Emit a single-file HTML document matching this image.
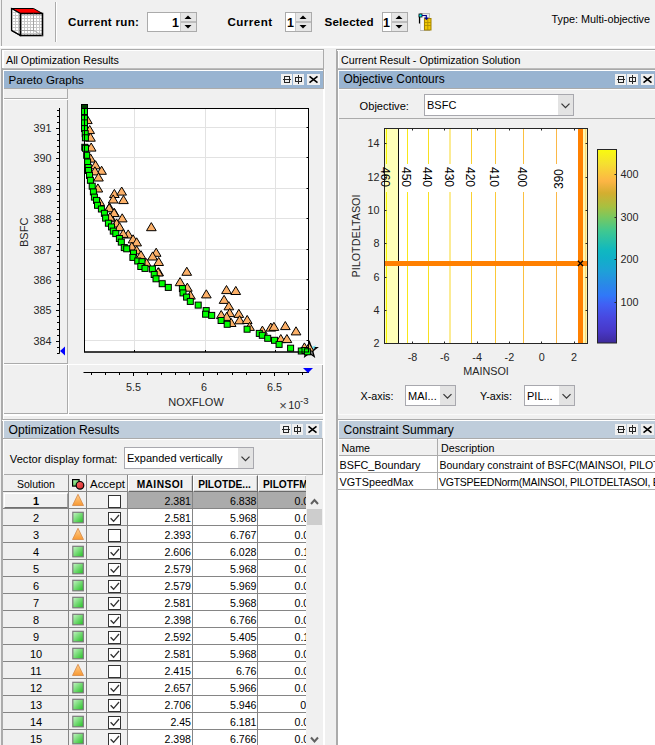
<!DOCTYPE html><html><head><meta charset="utf-8"><style>
html,body{margin:0;padding:0;width:655px;height:745px;overflow:hidden;background:#f0f0f0;font-family:"Liberation Sans",sans-serif;color:#000;position:relative}
div{box-sizing:border-box}
svg{position:absolute;overflow:visible}
</style></head><body>
<div style="position:absolute;left:1px;top:0px;width:1px;height:47px;background:#ababab"></div>
<div style="position:absolute;left:0px;top:46px;width:655px;height:2px;background:#fff"></div>
<svg style="left:0;top:0" width="60" height="46">
<defs><pattern id="gp" width="3" height="3" patternUnits="userSpaceOnUse"><rect width="3" height="3" fill="#fff"/><path d="M0 0.5H3M0.5 0V3" stroke="#c8c8c8" stroke-width="1"/></pattern></defs>
<polygon points="11.5,8.5 33.5,8.5 42.5,13.5 20.5,13.5" fill="#f00" stroke="#000" stroke-width="1"/>
<polygon points="11.5,8.5 20.5,13.5 20.5,35.5 11.5,30.5" fill="url(#gp)" stroke="#000" stroke-width="1.2"/>
<rect x="20.5" y="13.5" width="22" height="22" fill="url(#gp)" stroke="#000" stroke-width="1.6"/>
<path d="M11.5 30.5L20.5 35.5" stroke="#000" stroke-width="1.4"/>
<path d="M33.5 13.5V30.5H20.5M33.5 30.5L42.5 35.5" stroke="#888" stroke-width="0.6" fill="none"/>
</svg>
<div style="position:absolute;left:55px;top:2px;width:1px;height:40px;background:#ababab"></div>
<div style="position:absolute;left:56px;top:2px;width:1px;height:40px;background:#fff"></div>
<div style="position:absolute;left:68px;top:16px;font-size:11.6px;font-weight:700;line-height:1;white-space:nowrap;letter-spacing:0.3px">Current run:</div>
<div style="position:absolute;left:147px;top:12px;width:50px;height:20px;border:1px solid #ababab;background:#fff"></div>
<div style="position:absolute;left:180px;top:13px;width:16px;height:18px;background:#e6e6e6"></div>
<div style="position:absolute;left:180px;top:21px;width:16px;height:2px;background:#bdbdbd"></div>
<div style="position:absolute;left:180px;top:13px;width:1px;height:18px;background:#c8c8c8"></div>
<svg style="left:0;top:0" width="655" height="48"><polygon points="184.5,19 191.5,19 188.0,15.5" fill="#000"/><polygon points="184.5,25 191.5,25 188.0,28.5" fill="#000"/></svg>
<div style="position:absolute;right:476px;top:17px;font-size:12.5px;font-weight:700;line-height:1;white-space:nowrap;text-align:right;">1</div>
<div style="position:absolute;left:227.5px;top:16px;font-size:11.6px;font-weight:700;line-height:1;white-space:nowrap;letter-spacing:0.45px">Current</div>
<div style="position:absolute;left:285px;top:12px;width:27px;height:20px;border:1px solid #ababab;background:#fff"></div>
<div style="position:absolute;left:295px;top:13px;width:16px;height:18px;background:#e6e6e6"></div>
<div style="position:absolute;left:295px;top:21px;width:16px;height:2px;background:#bdbdbd"></div>
<div style="position:absolute;left:295px;top:13px;width:1px;height:18px;background:#c8c8c8"></div>
<svg style="left:0;top:0" width="655" height="48"><polygon points="299.5,19 306.5,19 303.0,15.5" fill="#000"/><polygon points="299.5,25 306.5,25 303.0,28.5" fill="#000"/></svg>
<div style="position:absolute;right:361px;top:17px;font-size:12.5px;font-weight:700;line-height:1;white-space:nowrap;text-align:right;">1</div>
<div style="position:absolute;left:324.5px;top:16px;font-size:11.6px;font-weight:700;line-height:1;white-space:nowrap;letter-spacing:0.2px">Selected</div>
<div style="position:absolute;left:382px;top:12px;width:26px;height:20px;border:1px solid #ababab;background:#fff"></div>
<div style="position:absolute;left:391px;top:13px;width:16px;height:18px;background:#e6e6e6"></div>
<div style="position:absolute;left:391px;top:21px;width:16px;height:2px;background:#bdbdbd"></div>
<div style="position:absolute;left:391px;top:13px;width:1px;height:18px;background:#c8c8c8"></div>
<svg style="left:0;top:0" width="655" height="48"><polygon points="395.5,19 402.5,19 399.0,15.5" fill="#000"/><polygon points="395.5,25 402.5,25 399.0,28.5" fill="#000"/></svg>
<div style="position:absolute;right:265px;top:17px;font-size:12.5px;font-weight:700;line-height:1;white-space:nowrap;text-align:right;">1</div>
<svg style="left:412px;top:8px" width="28" height="28">
<rect x="8.5" y="5.5" width="9" height="17" fill="#e8e8e8" stroke="#b8b8b8" stroke-width="1"/>
<rect x="8.5" y="9" width="3" height="13" fill="#f8f8f8"/>
<rect x="12.5" y="10.5" width="6.5" height="11.5" fill="#f0c800" stroke="#a08000" stroke-width="1"/>
<path d="M13 14.5H19M13 17.5H19M15.8 11V22" stroke="#b09000" stroke-width="0.9"/>
<path d="M7.5 7V15.5" stroke="#000" stroke-width="1.2"/>
<rect x="7" y="6" width="3" height="3" fill="#00ffff" stroke="#000" stroke-width="0.8"/>
<path d="M10 7.5H14.3V10" stroke="#000090" stroke-width="1.2" fill="none"/>
<polygon points="12,9.5 16.8,9.5 14.4,12.3" fill="#000090"/>
</svg>
<div style="position:absolute;left:551.6px;top:14.2px;font-size:10.8px;font-weight:400;line-height:1;white-space:nowrap;">Type: Multi-objective</div>
<div style="position:absolute;left:1px;top:49px;width:323px;height:1px;background:#ababab"></div>
<div style="position:absolute;left:1px;top:49px;width:2px;height:696px;background:#ababab"></div>
<div style="position:absolute;left:3px;top:50px;width:1px;height:695px;background:#fff"></div>
<div style="position:absolute;left:2px;top:50px;width:1px;height:18px;background:#fff"></div>
<div style="position:absolute;left:2px;top:50px;width:321px;height:1px;background:#fff"></div>
<div style="position:absolute;left:323px;top:49px;width:1px;height:20px;background:#ababab"></div>
<div style="position:absolute;left:3px;top:68px;width:321px;height:1px;background:#bcbcbc"></div>
<div style="position:absolute;left:3px;top:69px;width:321px;height:1px;background:#a9a9a9"></div>
<div style="position:absolute;left:3px;top:70px;width:320px;height:1px;background:#fff"></div>
<div style="position:absolute;left:6px;top:55px;font-size:10.7px;font-weight:400;line-height:1;white-space:nowrap;">All Optimization Results</div>
<div style="position:absolute;left:4px;top:71px;width:319px;height:17px;background:#99b4d1"></div>
<div style="position:absolute;left:8.5px;top:74.3px;font-size:11.6px;font-weight:400;line-height:1;white-space:nowrap;">Pareto Graphs</div>
<svg style="left:281px;top:74px" width="42" height="12">
<rect x="0" y="0" width="11" height="11" fill="#f0f0f0"/>
<rect x="12" y="0" width="11" height="11" fill="#f0f0f0"/>
<rect x="26" y="0" width="13" height="11" fill="#f0f0f0"/>
<rect x="3.5" y="2.5" width="5" height="6" fill="none" stroke="#262626" stroke-width="1"/><path d="M2 5.5H10" stroke="#262626" stroke-width="1"/>
<rect x="14.5" y="3.5" width="6" height="4" fill="none" stroke="#262626" stroke-width="1"/><path d="M17.5 1V10" stroke="#262626" stroke-width="1"/>
<path d="M28.5 2.3L36.5 8.7M36.5 2.3L28.5 8.7" stroke="#000" stroke-width="1.6"/>
</svg>
<div style="position:absolute;left:323px;top:49px;width:1px;height:40px;background:#ababab"></div>
<div style="position:absolute;left:4px;top:88px;width:320px;height:1px;background:#ababab"></div>
<div style="position:absolute;left:324px;top:69px;width:1px;height:676px;background:#fff"></div>
<div style="position:absolute;left:323px;top:89px;width:1px;height:656px;background:#fff"></div>
<div style="position:absolute;left:3px;top:89px;width:320px;height:325px;background:#fff"></div>
<div style="position:absolute;left:4px;top:89px;width:64px;height:10px;border-right:1px solid #ababab;border-bottom:1px solid #ababab;background:#f0f0f0"></div>
<div style="position:absolute;left:4px;top:100px;width:64px;height:264px;border-right:1px solid #ababab;border-bottom:1px solid #ababab;background:#f0f0f0"></div>
<div style="position:absolute;left:68px;top:89px;width:255px;height:275px;background:#f0f0f0"></div>
<div style="position:absolute;left:4px;top:365px;width:64px;height:49px;border-right:1px solid #ababab;border-bottom:1px solid #ababab;background:#f0f0f0"></div>
<div style="position:absolute;left:69px;top:365px;width:254px;height:49px;border-right:1px solid #ababab;border-bottom:1px solid #ababab;background:#f0f0f0"></div>
<svg style="left:0;top:0" width="655" height="745"><rect x="84.5" y="108.5" width="224.0" height="243.5" fill="#fff"/><path d="M134.5 108.5V352" stroke="#e2e2e2" stroke-width="1"/><path d="M205.5 108.5V352" stroke="#e2e2e2" stroke-width="1"/><path d="M275.5 108.5V352" stroke="#e2e2e2" stroke-width="1"/><path d="M84.5 127.5H308.5" stroke="#e2e2e2" stroke-width="1"/><path d="M84.5 157.5H308.5" stroke="#e2e2e2" stroke-width="1"/><path d="M84.5 188.5H308.5" stroke="#e2e2e2" stroke-width="1"/><path d="M84.5 218.5H308.5" stroke="#e2e2e2" stroke-width="1"/><path d="M84.5 249.5H308.5" stroke="#e2e2e2" stroke-width="1"/><path d="M84.5 279.5H308.5" stroke="#e2e2e2" stroke-width="1"/><path d="M84.5 309.5H308.5" stroke="#e2e2e2" stroke-width="1"/><path d="M84.5 340.5H308.5" stroke="#e2e2e2" stroke-width="1"/><rect x="84.5" y="108.5" width="224.0" height="243.5" fill="none" stroke="#000" stroke-width="1"/><path d="M306.5 127.5H308.5" stroke="#000" stroke-width="1"/><path d="M306.5 157.5H308.5" stroke="#000" stroke-width="1"/><path d="M306.5 188.5H308.5" stroke="#000" stroke-width="1"/><path d="M306.5 218.5H308.5" stroke="#000" stroke-width="1"/><path d="M306.5 249.5H308.5" stroke="#000" stroke-width="1"/><path d="M306.5 279.5H308.5" stroke="#000" stroke-width="1"/><path d="M306.5 309.5H308.5" stroke="#000" stroke-width="1"/><path d="M306.5 340.5H308.5" stroke="#000" stroke-width="1"/><path d="M134.5 352V350" stroke="#000" stroke-width="1"/><path d="M205.5 352V350" stroke="#000" stroke-width="1"/><path d="M275.5 352V350" stroke="#000" stroke-width="1"/><polygon points="309.5,342.0 311.4,347.3 317.1,347.5 312.6,351.0 314.2,356.5 309.5,353.3 304.8,356.5 306.4,351.0 301.9,347.5 307.6,347.3" fill="#808080" stroke="#000" stroke-width="1.3"/><polygon points="311,347 316,345.5 313,350" fill="#70e0f0"/><polygon points="82.5,123.6 92.2,123.6 87.4,115.5" fill="#fcb068" stroke="#000" stroke-width="1" stroke-linejoin="miter"/><polygon points="84.8,133.6 94.5,133.6 89.7,125.5" fill="#fcb068" stroke="#000" stroke-width="1" stroke-linejoin="miter"/><polygon points="85.6,141.2 95.3,141.2 90.5,133.1" fill="#fcb068" stroke="#000" stroke-width="1" stroke-linejoin="miter"/><polygon points="86.3,151.1 96.0,151.1 91.2,143.0" fill="#fcb068" stroke="#000" stroke-width="1" stroke-linejoin="miter"/><polygon points="85.7,162.1 95.4,162.1 90.6,154.0" fill="#fcb068" stroke="#000" stroke-width="1" stroke-linejoin="miter"/><polygon points="90.6,168.8 100.3,168.8 95.5,160.7" fill="#fcb068" stroke="#000" stroke-width="1" stroke-linejoin="miter"/><polygon points="96.7,174.3 106.4,174.3 101.6,166.2" fill="#fcb068" stroke="#000" stroke-width="1" stroke-linejoin="miter"/><polygon points="90.0,174.9 99.7,174.9 94.9,166.8" fill="#fcb068" stroke="#000" stroke-width="1" stroke-linejoin="miter"/><polygon points="93.6,181.0 103.3,181.0 98.5,172.9" fill="#fcb068" stroke="#000" stroke-width="1" stroke-linejoin="miter"/><polygon points="93.0,192.0 102.7,192.0 97.9,183.9" fill="#fcb068" stroke="#000" stroke-width="1" stroke-linejoin="miter"/><polygon points="109.5,197.5 119.2,197.5 114.4,189.4" fill="#fcb068" stroke="#000" stroke-width="1" stroke-linejoin="miter"/><polygon points="116.8,195.1 126.5,195.1 121.7,187.0" fill="#fcb068" stroke="#000" stroke-width="1" stroke-linejoin="miter"/><polygon points="108.3,203.0 118.0,203.0 113.2,194.9" fill="#fcb068" stroke="#000" stroke-width="1" stroke-linejoin="miter"/><polygon points="118.6,203.6 128.3,203.6 123.5,195.5" fill="#fcb068" stroke="#000" stroke-width="1" stroke-linejoin="miter"/><polygon points="94.8,205.5 104.5,205.5 99.7,197.4" fill="#fcb068" stroke="#000" stroke-width="1" stroke-linejoin="miter"/><polygon points="104.6,211.0 114.3,211.0 109.5,202.9" fill="#fcb068" stroke="#000" stroke-width="1" stroke-linejoin="miter"/><polygon points="109.5,216.4 119.2,216.4 114.4,208.3" fill="#fcb068" stroke="#000" stroke-width="1" stroke-linejoin="miter"/><polygon points="117.4,221.9 127.1,221.9 122.2,213.8" fill="#fcb068" stroke="#000" stroke-width="1" stroke-linejoin="miter"/><polygon points="106.3,221.8 116.0,221.8 111.2,213.7" fill="#fcb068" stroke="#000" stroke-width="1" stroke-linejoin="miter"/><polygon points="104.3,211.8 114.0,211.8 109.2,203.7" fill="#fcb068" stroke="#000" stroke-width="1" stroke-linejoin="miter"/><polygon points="109.2,216.6 118.9,216.6 114.1,208.5" fill="#fcb068" stroke="#000" stroke-width="1" stroke-linejoin="miter"/><polygon points="105.0,220.9 114.7,220.9 109.9,212.8" fill="#fcb068" stroke="#000" stroke-width="1" stroke-linejoin="miter"/><polygon points="111.7,227.0 121.4,227.0 116.6,218.9" fill="#fcb068" stroke="#000" stroke-width="1" stroke-linejoin="miter"/><polygon points="114.7,230.7 124.4,230.7 119.6,222.6" fill="#fcb068" stroke="#000" stroke-width="1" stroke-linejoin="miter"/><polygon points="146.5,230.7 156.2,230.7 151.3,222.6" fill="#fcb068" stroke="#000" stroke-width="1" stroke-linejoin="miter"/><polygon points="123.3,238.0 133.0,238.0 128.2,229.9" fill="#fcb068" stroke="#000" stroke-width="1" stroke-linejoin="miter"/><polygon points="118.4,237.4 128.1,237.4 123.2,229.3" fill="#fcb068" stroke="#000" stroke-width="1" stroke-linejoin="miter"/><polygon points="128.2,242.9 137.9,242.9 133.1,234.8" fill="#fcb068" stroke="#000" stroke-width="1" stroke-linejoin="miter"/><polygon points="131.8,245.9 141.5,245.9 136.7,237.8" fill="#fcb068" stroke="#000" stroke-width="1" stroke-linejoin="miter"/><polygon points="126.9,250.2 136.6,250.2 131.8,242.1" fill="#fcb068" stroke="#000" stroke-width="1" stroke-linejoin="miter"/><polygon points="131.8,253.9 141.5,253.9 136.7,245.8" fill="#fcb068" stroke="#000" stroke-width="1" stroke-linejoin="miter"/><polygon points="136.1,258.8 145.8,258.8 141.0,250.7" fill="#fcb068" stroke="#000" stroke-width="1" stroke-linejoin="miter"/><polygon points="151.3,256.3 161.0,256.3 156.2,248.2" fill="#fcb068" stroke="#000" stroke-width="1" stroke-linejoin="miter"/><polygon points="147.7,260.0 157.4,260.0 152.6,251.9" fill="#fcb068" stroke="#000" stroke-width="1" stroke-linejoin="miter"/><polygon points="141.6,266.7 151.3,266.7 146.5,258.6" fill="#fcb068" stroke="#000" stroke-width="1" stroke-linejoin="miter"/><polygon points="153.8,265.5 163.5,265.5 158.7,257.4" fill="#fcb068" stroke="#000" stroke-width="1" stroke-linejoin="miter"/><polygon points="153.8,275.8 163.5,275.8 158.7,267.7" fill="#fcb068" stroke="#000" stroke-width="1" stroke-linejoin="miter"/><polygon points="153.2,275.9 162.9,275.9 158.1,267.8" fill="#fcb068" stroke="#000" stroke-width="1" stroke-linejoin="miter"/><polygon points="181.9,275.3 191.6,275.3 186.8,267.2" fill="#fcb068" stroke="#000" stroke-width="1" stroke-linejoin="miter"/><polygon points="175.2,285.7 184.9,285.7 180.1,277.6" fill="#fcb068" stroke="#000" stroke-width="1" stroke-linejoin="miter"/><polygon points="182.5,291.2 192.2,291.2 187.3,283.1" fill="#fcb068" stroke="#000" stroke-width="1" stroke-linejoin="miter"/><polygon points="185.6,299.1 195.3,299.1 190.5,291.0" fill="#fcb068" stroke="#000" stroke-width="1" stroke-linejoin="miter"/><polygon points="201.5,297.9 211.2,297.9 206.3,289.8" fill="#fcb068" stroke="#000" stroke-width="1" stroke-linejoin="miter"/><polygon points="221.6,293.6 231.3,293.6 226.5,285.5" fill="#fcb068" stroke="#000" stroke-width="1" stroke-linejoin="miter"/><polygon points="230.9,294.5 240.6,294.5 235.8,286.4" fill="#fcb068" stroke="#000" stroke-width="1" stroke-linejoin="miter"/><polygon points="219.2,303.4 228.9,303.4 224.1,295.3" fill="#fcb068" stroke="#000" stroke-width="1" stroke-linejoin="miter"/><polygon points="224.0,309.8 233.7,309.8 228.8,301.7" fill="#fcb068" stroke="#000" stroke-width="1" stroke-linejoin="miter"/><polygon points="216.4,318.6 226.1,318.6 221.2,310.5" fill="#fcb068" stroke="#000" stroke-width="1" stroke-linejoin="miter"/><polygon points="224.8,316.6 234.5,316.6 229.7,308.5" fill="#fcb068" stroke="#000" stroke-width="1" stroke-linejoin="miter"/><polygon points="221.8,320.4 231.5,320.4 226.7,312.3" fill="#fcb068" stroke="#000" stroke-width="1" stroke-linejoin="miter"/><polygon points="234.0,317.4 243.7,317.4 238.8,309.3" fill="#fcb068" stroke="#000" stroke-width="1" stroke-linejoin="miter"/><polygon points="234.7,323.8 244.4,323.8 239.6,315.7" fill="#fcb068" stroke="#000" stroke-width="1" stroke-linejoin="miter"/><polygon points="242.4,323.5 252.1,323.5 247.2,315.4" fill="#fcb068" stroke="#000" stroke-width="1" stroke-linejoin="miter"/><polygon points="226.3,326.5 236.0,326.5 231.2,318.4" fill="#fcb068" stroke="#000" stroke-width="1" stroke-linejoin="miter"/><polygon points="244.7,330.4 254.4,330.4 249.6,322.3" fill="#fcb068" stroke="#000" stroke-width="1" stroke-linejoin="miter"/><polygon points="257.6,334.2 267.3,334.2 262.4,326.1" fill="#fcb068" stroke="#000" stroke-width="1" stroke-linejoin="miter"/><polygon points="266.0,331.1 275.7,331.1 270.8,323.0" fill="#fcb068" stroke="#000" stroke-width="1" stroke-linejoin="miter"/><polygon points="269.1,330.4 278.8,330.4 273.9,322.3" fill="#fcb068" stroke="#000" stroke-width="1" stroke-linejoin="miter"/><polygon points="280.5,329.6 290.2,329.6 285.3,321.5" fill="#fcb068" stroke="#000" stroke-width="1" stroke-linejoin="miter"/><polygon points="291.2,334.9 300.9,334.9 296.0,326.8" fill="#fcb068" stroke="#000" stroke-width="1" stroke-linejoin="miter"/><polygon points="275.9,342.6 285.6,342.6 280.8,334.5" fill="#fcb068" stroke="#000" stroke-width="1" stroke-linejoin="miter"/><polygon points="282.1,342.6 291.8,342.6 286.9,334.5" fill="#fcb068" stroke="#000" stroke-width="1" stroke-linejoin="miter"/><polygon points="299.6,351.0 309.3,351.0 304.4,342.9" fill="#fcb068" stroke="#000" stroke-width="1" stroke-linejoin="miter"/><polygon points="304.2,351.0 313.9,351.0 309.0,342.9" fill="#fcb068" stroke="#000" stroke-width="1" stroke-linejoin="miter"/><rect x="81.5" y="108.5" width="6" height="6" fill="#00ff00" stroke="#000" stroke-width="1"/><rect x="81.5" y="115.3" width="6" height="6" fill="#00ff00" stroke="#000" stroke-width="1"/><rect x="81.5" y="119.9" width="6" height="6" fill="#00ff00" stroke="#000" stroke-width="1"/><rect x="81.5" y="125.6" width="6" height="6" fill="#00ff00" stroke="#000" stroke-width="1"/><rect x="82.2" y="130.6" width="6" height="6" fill="#00ff00" stroke="#000" stroke-width="1"/><rect x="82.4" y="134.8" width="6" height="6" fill="#00ff00" stroke="#000" stroke-width="1"/><rect x="81.8" y="144.3" width="6" height="6" fill="#00ff00" stroke="#000" stroke-width="1"/><rect x="82.5" y="145.3" width="6" height="6" fill="#00ff00" stroke="#000" stroke-width="1"/><rect x="83.7" y="152.3" width="6" height="6" fill="#00ff00" stroke="#000" stroke-width="1"/><rect x="84.6" y="159.0" width="6" height="6" fill="#00ff00" stroke="#000" stroke-width="1"/><rect x="85.3" y="164.5" width="6" height="6" fill="#00ff00" stroke="#000" stroke-width="1"/><rect x="85.5" y="167.5" width="6" height="6" fill="#00ff00" stroke="#000" stroke-width="1"/><rect x="86.5" y="172.4" width="6" height="6" fill="#00ff00" stroke="#000" stroke-width="1"/><rect x="87.4" y="177.3" width="6" height="6" fill="#00ff00" stroke="#000" stroke-width="1"/><rect x="89.2" y="183.2" width="6" height="6" fill="#00ff00" stroke="#000" stroke-width="1"/><rect x="90.4" y="188.9" width="6" height="6" fill="#00ff00" stroke="#000" stroke-width="1"/><rect x="91.4" y="194.1" width="6" height="6" fill="#00ff00" stroke="#000" stroke-width="1"/><rect x="93.5" y="197.4" width="6" height="6" fill="#00ff00" stroke="#000" stroke-width="1"/><rect x="94.5" y="202.3" width="6" height="6" fill="#00ff00" stroke="#000" stroke-width="1"/><rect x="98.4" y="206.0" width="6" height="6" fill="#00ff00" stroke="#000" stroke-width="1"/><rect x="101.4" y="210.3" width="6" height="6" fill="#00ff00" stroke="#000" stroke-width="1"/><rect x="102.6" y="215.1" width="6" height="6" fill="#00ff00" stroke="#000" stroke-width="1"/><rect x="105.4" y="220.2" width="6" height="6" fill="#00ff00" stroke="#000" stroke-width="1"/><rect x="108.5" y="223.9" width="6" height="6" fill="#00ff00" stroke="#000" stroke-width="1"/><rect x="110.3" y="228.1" width="6" height="6" fill="#00ff00" stroke="#000" stroke-width="1"/><rect x="112.8" y="230.6" width="6" height="6" fill="#00ff00" stroke="#000" stroke-width="1"/><rect x="116.4" y="235.5" width="6" height="6" fill="#00ff00" stroke="#000" stroke-width="1"/><rect x="118.3" y="239.1" width="6" height="6" fill="#00ff00" stroke="#000" stroke-width="1"/><rect x="121.3" y="244.6" width="6" height="6" fill="#00ff00" stroke="#000" stroke-width="1"/><rect x="123.7" y="245.8" width="6" height="6" fill="#00ff00" stroke="#000" stroke-width="1"/><rect x="130.5" y="250.1" width="6" height="6" fill="#00ff00" stroke="#000" stroke-width="1"/><rect x="129.9" y="254.4" width="6" height="6" fill="#00ff00" stroke="#000" stroke-width="1"/><rect x="134.7" y="258.0" width="6" height="6" fill="#00ff00" stroke="#000" stroke-width="1"/><rect x="139.0" y="258.7" width="6" height="6" fill="#00ff00" stroke="#000" stroke-width="1"/><rect x="137.8" y="263.5" width="6" height="6" fill="#00ff00" stroke="#000" stroke-width="1"/><rect x="142.0" y="265.4" width="6" height="6" fill="#00ff00" stroke="#000" stroke-width="1"/><rect x="149.4" y="266.0" width="6" height="6" fill="#00ff00" stroke="#000" stroke-width="1"/><rect x="151.2" y="271.5" width="6" height="6" fill="#00ff00" stroke="#000" stroke-width="1"/><rect x="153.0" y="275.8" width="6" height="6" fill="#00ff00" stroke="#000" stroke-width="1"/><rect x="159.2" y="280.7" width="6" height="6" fill="#00ff00" stroke="#000" stroke-width="1"/><rect x="165.3" y="284.4" width="6" height="6" fill="#00ff00" stroke="#000" stroke-width="1"/><rect x="179.4" y="285.6" width="6" height="6" fill="#00ff00" stroke="#000" stroke-width="1"/><rect x="180.0" y="289.9" width="6" height="6" fill="#00ff00" stroke="#000" stroke-width="1"/><rect x="183.6" y="294.1" width="6" height="6" fill="#00ff00" stroke="#000" stroke-width="1"/><rect x="187.3" y="298.4" width="6" height="6" fill="#00ff00" stroke="#000" stroke-width="1"/><rect x="195.2" y="302.1" width="6" height="6" fill="#00ff00" stroke="#000" stroke-width="1"/><rect x="203.2" y="307.6" width="6" height="6" fill="#00ff00" stroke="#000" stroke-width="1"/><rect x="202.6" y="311.2" width="6" height="6" fill="#00ff00" stroke="#000" stroke-width="1"/><rect x="208.7" y="312.4" width="6" height="6" fill="#00ff00" stroke="#000" stroke-width="1"/><rect x="218.1" y="317.5" width="6" height="6" fill="#00ff00" stroke="#000" stroke-width="1"/><rect x="224.2" y="321.3" width="6" height="6" fill="#00ff00" stroke="#000" stroke-width="1"/><rect x="244.1" y="326.2" width="6" height="6" fill="#00ff00" stroke="#000" stroke-width="1"/><rect x="256.3" y="330.4" width="6" height="6" fill="#00ff00" stroke="#000" stroke-width="1"/><rect x="259.3" y="332.3" width="6" height="6" fill="#00ff00" stroke="#000" stroke-width="1"/><rect x="264.7" y="335.3" width="6" height="6" fill="#00ff00" stroke="#000" stroke-width="1"/><rect x="271.5" y="337.3" width="6" height="6" fill="#00ff00" stroke="#000" stroke-width="1"/><rect x="276.1" y="341.4" width="6" height="6" fill="#00ff00" stroke="#000" stroke-width="1"/><rect x="287.6" y="345.2" width="6" height="6" fill="#00ff00" stroke="#000" stroke-width="1"/><rect x="298.3" y="348.0" width="6" height="6" fill="#00ff00" stroke="#000" stroke-width="1"/><rect x="302.0" y="347.5" width="6" height="6" fill="#00ff00" stroke="#000" stroke-width="1"/><rect x="304.4" y="348.8" width="6" height="6" fill="#00ff00" stroke="#000" stroke-width="1"/><rect x="81.5" y="104.5" width="6" height="4" fill="#004000" stroke="#000" stroke-width="1"/><rect x="84.5" y="108.5" width="224.0" height="243.5" fill="none" stroke="#000" stroke-width="1"/><path d="M59.5 108V353.5" stroke="#000" stroke-width="1"/><path d="M57 110.5H59.5" stroke="#000" stroke-width="1"/><path d="M57 116.5H59.5" stroke="#000" stroke-width="1"/><path d="M57 122.5H59.5" stroke="#000" stroke-width="1"/><path d="M57 128.5H59.5" stroke="#000" stroke-width="1"/><path d="M57 134.5H59.5" stroke="#000" stroke-width="1"/><path d="M57 140.5H59.5" stroke="#000" stroke-width="1"/><path d="M57 146.5H59.5" stroke="#000" stroke-width="1"/><path d="M57 152.5H59.5" stroke="#000" stroke-width="1"/><path d="M57 158.5H59.5" stroke="#000" stroke-width="1"/><path d="M57 165.5H59.5" stroke="#000" stroke-width="1"/><path d="M57 171.5H59.5" stroke="#000" stroke-width="1"/><path d="M57 177.5H59.5" stroke="#000" stroke-width="1"/><path d="M57 183.5H59.5" stroke="#000" stroke-width="1"/><path d="M57 189.5H59.5" stroke="#000" stroke-width="1"/><path d="M57 195.5H59.5" stroke="#000" stroke-width="1"/><path d="M57 201.5H59.5" stroke="#000" stroke-width="1"/><path d="M57 207.5H59.5" stroke="#000" stroke-width="1"/><path d="M57 213.5H59.5" stroke="#000" stroke-width="1"/><path d="M57 219.5H59.5" stroke="#000" stroke-width="1"/><path d="M57 225.5H59.5" stroke="#000" stroke-width="1"/><path d="M57 231.5H59.5" stroke="#000" stroke-width="1"/><path d="M57 237.5H59.5" stroke="#000" stroke-width="1"/><path d="M57 244.5H59.5" stroke="#000" stroke-width="1"/><path d="M57 250.5H59.5" stroke="#000" stroke-width="1"/><path d="M57 256.5H59.5" stroke="#000" stroke-width="1"/><path d="M57 262.5H59.5" stroke="#000" stroke-width="1"/><path d="M57 268.5H59.5" stroke="#000" stroke-width="1"/><path d="M57 274.5H59.5" stroke="#000" stroke-width="1"/><path d="M57 280.5H59.5" stroke="#000" stroke-width="1"/><path d="M57 286.5H59.5" stroke="#000" stroke-width="1"/><path d="M57 292.5H59.5" stroke="#000" stroke-width="1"/><path d="M57 298.5H59.5" stroke="#000" stroke-width="1"/><path d="M57 304.5H59.5" stroke="#000" stroke-width="1"/><path d="M57 310.5H59.5" stroke="#000" stroke-width="1"/><path d="M57 316.5H59.5" stroke="#000" stroke-width="1"/><path d="M57 322.5H59.5" stroke="#000" stroke-width="1"/><path d="M57 329.5H59.5" stroke="#000" stroke-width="1"/><path d="M57 335.5H59.5" stroke="#000" stroke-width="1"/><path d="M57 341.5H59.5" stroke="#000" stroke-width="1"/><path d="M57 347.5H59.5" stroke="#000" stroke-width="1"/><path d="M57 353.5H59.5" stroke="#000" stroke-width="1"/><path d="M56 128.5H59.5" stroke="#000" stroke-width="1"/><path d="M56 158.5H59.5" stroke="#000" stroke-width="1"/><path d="M56 189.5H59.5" stroke="#000" stroke-width="1"/><path d="M56 219.5H59.5" stroke="#000" stroke-width="1"/><path d="M56 250.5H59.5" stroke="#000" stroke-width="1"/><path d="M56 280.5H59.5" stroke="#000" stroke-width="1"/><path d="M56 310.5H59.5" stroke="#000" stroke-width="1"/><path d="M56 341.5H59.5" stroke="#000" stroke-width="1"/><polygon points="60,351 65,346.5 65,355.5" fill="#0000ff"/><path d="M83.5 372.5H309" stroke="#000" stroke-width="1"/><path d="M91.5 372.5V375" stroke="#000" stroke-width="1"/><path d="M105.5 372.5V375" stroke="#000" stroke-width="1"/><path d="M119.5 372.5V375" stroke="#000" stroke-width="1"/><path d="M133.5 372.5V375" stroke="#000" stroke-width="1"/><path d="M147.5 372.5V375" stroke="#000" stroke-width="1"/><path d="M161.5 372.5V375" stroke="#000" stroke-width="1"/><path d="M175.5 372.5V375" stroke="#000" stroke-width="1"/><path d="M189.5 372.5V375" stroke="#000" stroke-width="1"/><path d="M203.5 372.5V375" stroke="#000" stroke-width="1"/><path d="M217.5 372.5V375" stroke="#000" stroke-width="1"/><path d="M232.5 372.5V375" stroke="#000" stroke-width="1"/><path d="M246.5 372.5V375" stroke="#000" stroke-width="1"/><path d="M260.5 372.5V375" stroke="#000" stroke-width="1"/><path d="M274.5 372.5V375" stroke="#000" stroke-width="1"/><path d="M288.5 372.5V375" stroke="#000" stroke-width="1"/><path d="M302.5 372.5V375" stroke="#000" stroke-width="1"/><path d="M133.5 372.5V376" stroke="#000" stroke-width="1"/><path d="M203.5 372.5V376" stroke="#000" stroke-width="1"/><path d="M274.5 372.5V376" stroke="#000" stroke-width="1"/><polygon points="303,368 313,368 308,373" fill="#0000ff"/></svg>
<div style="position:absolute;right:603.5px;top:123.1px;font-size:10.8px;font-weight:400;line-height:1;white-space:nowrap;text-align:right;color:#262626">391</div>
<div style="position:absolute;right:603.5px;top:153.47px;font-size:10.8px;font-weight:400;line-height:1;white-space:nowrap;text-align:right;color:#262626">390</div>
<div style="position:absolute;right:603.5px;top:183.84px;font-size:10.8px;font-weight:400;line-height:1;white-space:nowrap;text-align:right;color:#262626">389</div>
<div style="position:absolute;right:603.5px;top:214.20999999999998px;font-size:10.8px;font-weight:400;line-height:1;white-space:nowrap;text-align:right;color:#262626">388</div>
<div style="position:absolute;right:603.5px;top:244.57999999999998px;font-size:10.8px;font-weight:400;line-height:1;white-space:nowrap;text-align:right;color:#262626">387</div>
<div style="position:absolute;right:603.5px;top:274.95px;font-size:10.8px;font-weight:400;line-height:1;white-space:nowrap;text-align:right;color:#262626">386</div>
<div style="position:absolute;right:603.5px;top:305.32px;font-size:10.8px;font-weight:400;line-height:1;white-space:nowrap;text-align:right;color:#262626">385</div>
<div style="position:absolute;right:603.5px;top:335.69px;font-size:10.8px;font-weight:400;line-height:1;white-space:nowrap;text-align:right;color:#262626">384</div>
<div style="position:absolute;left:33.400000000000006px;width:200px;top:382.2px;font-size:10.8px;font-weight:400;line-height:1;white-space:nowrap;text-align:center;color:#262626">5.5</div>
<div style="position:absolute;left:103.9px;width:200px;top:382.2px;font-size:10.8px;font-weight:400;line-height:1;white-space:nowrap;text-align:center;color:#262626">6</div>
<div style="position:absolute;left:174.39999999999998px;width:200px;top:382.2px;font-size:10.8px;font-weight:400;line-height:1;white-space:nowrap;text-align:center;color:#262626">6.5</div>
<div style="position:absolute;left:96px;width:200px;top:397px;font-size:11px;font-weight:400;line-height:1;white-space:nowrap;text-align:center;color:#262626">NOXFLOW</div>
<div style="position:absolute;left:279.2px;top:398.8px;font-size:13px;font-weight:400;line-height:1;white-space:nowrap;color:#404040">&#215;</div>
<div style="position:absolute;left:288.2px;top:399.6px;font-size:11px;font-weight:400;line-height:1;white-space:nowrap;color:#262626">10</div>
<div style="position:absolute;left:300px;top:395.6px;font-size:9.6px;font-weight:400;line-height:1;white-space:nowrap;color:#262626">-3</div>
<div style="position:absolute;left:18.5px;top:247px;font-size:11px;line-height:1;color:#262626;white-space:nowrap;transform:rotate(-90deg);transform-origin:0 0">BSFC</div>
<div style="position:absolute;left:336px;top:49px;width:319px;height:1px;background:#ababab"></div>
<div style="position:absolute;left:336px;top:49px;width:2px;height:696px;background:#ababab"></div>
<div style="position:absolute;left:338px;top:50px;width:1px;height:695px;background:#fff"></div>
<div style="position:absolute;left:337px;top:50px;width:318px;height:1px;background:#fff"></div>
<div style="position:absolute;left:338px;top:68px;width:317px;height:1px;background:#bcbcbc"></div>
<div style="position:absolute;left:338px;top:69px;width:317px;height:1px;background:#a9a9a9"></div>
<div style="position:absolute;left:339px;top:70px;width:316px;height:1px;background:#fff"></div>
<div style="position:absolute;left:341px;top:55px;font-size:10.7px;font-weight:400;line-height:1;white-space:nowrap;">Current Result - Optimization Solution</div>
<div style="position:absolute;left:339px;top:71px;width:318px;height:17px;background:#99b4d1"></div>
<div style="position:absolute;left:343.5px;top:74.3px;font-size:11.9px;font-weight:400;line-height:1;white-space:nowrap;">Objective Contours</div>
<svg style="left:615px;top:74px" width="42" height="12">
<rect x="0" y="0" width="11" height="11" fill="#f0f0f0"/>
<rect x="12" y="0" width="11" height="11" fill="#f0f0f0"/>
<rect x="26" y="0" width="13" height="11" fill="#f0f0f0"/>
<rect x="3.5" y="2.5" width="5" height="6" fill="none" stroke="#262626" stroke-width="1"/><path d="M2 5.5H10" stroke="#262626" stroke-width="1"/>
<rect x="14.5" y="3.5" width="6" height="4" fill="none" stroke="#262626" stroke-width="1"/><path d="M17.5 1V10" stroke="#262626" stroke-width="1"/>
<path d="M28.5 2.3L36.5 8.7M36.5 2.3L28.5 8.7" stroke="#000" stroke-width="1.6"/>
</svg>
<div style="position:absolute;left:339px;top:89px;width:316px;height:29px;background:#f0f0f0"></div>
<div style="position:absolute;left:339px;top:88px;width:316px;height:1px;background:#ababab"></div>
<div style="position:absolute;left:339px;top:89px;width:316px;height:1px;background:#fff"></div>
<div style="position:absolute;left:339px;top:118px;width:316px;height:1px;background:#ababab"></div>
<div style="position:absolute;left:359.6px;top:101px;font-size:11.1px;font-weight:400;line-height:1;white-space:nowrap;">Objective:</div>
<div style="position:absolute;left:424px;top:94px;width:150px;height:22px;border:1px solid #a8a8ae;background:#fff"></div>
<div style="position:absolute;left:558px;top:95px;width:15px;height:20px;background:#e3e3e3"></div>
<svg style="left:0;top:0" width="655" height="745"><path d="M561.5 103.6L565.5 107.6L569.5 103.6" fill="none" stroke="#383838" stroke-width="1.3"/></svg>
<div style="position:absolute;left:427px;top:100.0px;font-size:11px;font-weight:400;line-height:1;white-space:nowrap;">BSFC</div>
<svg style="left:0;top:0" width="655" height="745"><rect x="384.5" y="128.5" width="203.0" height="215.0" fill="#fff"/><rect x="384.5" y="128.5" width="13.899999999999977" height="215.0" fill="#ffffb8"/><rect x="583" y="128.5" width="4.5" height="215.0" fill="#fff7b0"/><path d="M386.5 128.5V164M386.5 192V343.5" stroke="#f4f400" stroke-width="1"/><path d="M407.5 128.5V164M407.5 192V343.5" stroke="#f8e818" stroke-width="1"/><path d="M428.5 128.5V164M428.5 192V343.5" stroke="#f8e020" stroke-width="1"/><path d="M450.0 128.5V164M450.0 192V343.5" stroke="#f9d828" stroke-width="1"/><path d="M471.5 128.5V164M471.5 192V343.5" stroke="#fad030" stroke-width="1"/><path d="M495.5 128.5V164M495.5 192V343.5" stroke="#fbc838" stroke-width="1"/><path d="M523.5 128.5V164M523.5 192V343.5" stroke="#fbc040" stroke-width="1"/><path d="M556.5 128.5V164M556.5 192V343.5" stroke="#fbb848" stroke-width="1"/><path d="M585.6 128.5V343.5" stroke="#fdd870" stroke-width="1"/><path d="M398.5 128.5V343.5" stroke="#111" stroke-width="1"/><rect x="578" y="128.5" width="5" height="215.0" fill="#ff8000"/><rect x="384.5" y="261" width="203.0" height="5" fill="#ff8000"/><path d="M577.8 260.8L583 266M583 260.8L577.8 266" stroke="#000" stroke-width="1.3"/><rect x="384.5" y="128.5" width="203.0" height="215.0" fill="none" stroke="#262626" stroke-width="1"/><path d="M384.5 143.5h2M587.5 143.5h-2" stroke="#262626" stroke-width="1"/><path d="M384.5 177.5h2M587.5 177.5h-2" stroke="#262626" stroke-width="1"/><path d="M384.5 210.5h2M587.5 210.5h-2" stroke="#262626" stroke-width="1"/><path d="M384.5 243.5h2M587.5 243.5h-2" stroke="#262626" stroke-width="1"/><path d="M384.5 277.5h2M587.5 277.5h-2" stroke="#262626" stroke-width="1"/><path d="M384.5 310.5h2M587.5 310.5h-2" stroke="#262626" stroke-width="1"/><path d="M384.5 343.5h2M587.5 343.5h-2" stroke="#262626" stroke-width="1"/><path d="M412.5 343.5v-2M412.5 128.5v2" stroke="#262626" stroke-width="1"/><path d="M444.5 343.5v-2M444.5 128.5v2" stroke="#262626" stroke-width="1"/><path d="M477.5 343.5v-2M477.5 128.5v2" stroke="#262626" stroke-width="1"/><path d="M509.5 343.5v-2M509.5 128.5v2" stroke="#262626" stroke-width="1"/><path d="M541.5 343.5v-2M541.5 128.5v2" stroke="#262626" stroke-width="1"/><path d="M574.5 343.5v-2M574.5 128.5v2" stroke="#262626" stroke-width="1"/><defs><linearGradient id="parula" x1="0" y1="0" x2="0" y2="1"><stop offset="0" stop-color="#f9fb0e"/><stop offset="0.072" stop-color="#f5e030"/><stop offset="0.163" stop-color="#fdb545"/><stop offset="0.225" stop-color="#d4ae30"/><stop offset="0.295" stop-color="#a8c040"/><stop offset="0.35" stop-color="#78c860"/><stop offset="0.42" stop-color="#40c890"/><stop offset="0.52" stop-color="#10b8c0"/><stop offset="0.56" stop-color="#10b0c8"/><stop offset="0.63" stop-color="#1ea0d8"/><stop offset="0.7" stop-color="#2a88e8"/><stop offset="0.754" stop-color="#3078f8"/><stop offset="0.8" stop-color="#4060f4"/><stop offset="0.868" stop-color="#4848e0"/><stop offset="0.938" stop-color="#4838c8"/><stop offset="1" stop-color="#3e2a9a"/></linearGradient></defs><rect x="597.5" y="149.5" width="19" height="193.5" fill="url(#parula)" stroke="#262626" stroke-width="1"/><path d="M616.5 174.5h-2" stroke="#262626" stroke-width="1"/><path d="M616.5 217.5h-2" stroke="#262626" stroke-width="1"/><path d="M616.5 259.5h-2" stroke="#262626" stroke-width="1"/><path d="M616.5 302.5h-2" stroke="#262626" stroke-width="1"/></svg>
<div style="position:absolute;right:275.5px;top:138.3px;font-size:10.8px;font-weight:400;line-height:1;white-space:nowrap;text-align:right;color:#262626">14</div>
<div style="position:absolute;right:275.5px;top:171.6px;font-size:10.8px;font-weight:400;line-height:1;white-space:nowrap;text-align:right;color:#262626">12</div>
<div style="position:absolute;right:275.5px;top:204.9px;font-size:10.8px;font-weight:400;line-height:1;white-space:nowrap;text-align:right;color:#262626">10</div>
<div style="position:absolute;right:275.5px;top:238.2px;font-size:10.8px;font-weight:400;line-height:1;white-space:nowrap;text-align:right;color:#262626">8</div>
<div style="position:absolute;right:275.5px;top:271.5px;font-size:10.8px;font-weight:400;line-height:1;white-space:nowrap;text-align:right;color:#262626">6</div>
<div style="position:absolute;right:275.5px;top:304.8px;font-size:10.8px;font-weight:400;line-height:1;white-space:nowrap;text-align:right;color:#262626">4</div>
<div style="position:absolute;right:275.5px;top:338.0px;font-size:10.8px;font-weight:400;line-height:1;white-space:nowrap;text-align:right;color:#262626">2</div>
<div style="position:absolute;left:312.5px;width:200px;top:351.5px;font-size:10.8px;font-weight:400;line-height:1;white-space:nowrap;text-align:center;color:#262626">-8</div>
<div style="position:absolute;left:344.8px;width:200px;top:351.5px;font-size:10.8px;font-weight:400;line-height:1;white-space:nowrap;text-align:center;color:#262626">-6</div>
<div style="position:absolute;left:377.1px;width:200px;top:351.5px;font-size:10.8px;font-weight:400;line-height:1;white-space:nowrap;text-align:center;color:#262626">-4</div>
<div style="position:absolute;left:409.4px;width:200px;top:351.5px;font-size:10.8px;font-weight:400;line-height:1;white-space:nowrap;text-align:center;color:#262626">-2</div>
<div style="position:absolute;left:441.70000000000005px;width:200px;top:351.5px;font-size:10.8px;font-weight:400;line-height:1;white-space:nowrap;text-align:center;color:#262626">0</div>
<div style="position:absolute;left:474.0px;width:200px;top:351.5px;font-size:10.8px;font-weight:400;line-height:1;white-space:nowrap;text-align:center;color:#262626">2</div>
<div style="position:absolute;left:620.5px;top:168.6px;font-size:10.8px;font-weight:400;line-height:1;white-space:nowrap;color:#262626">400</div>
<div style="position:absolute;left:620.5px;top:211.8px;font-size:10.8px;font-weight:400;line-height:1;white-space:nowrap;color:#262626">300</div>
<div style="position:absolute;left:620.5px;top:254.0px;font-size:10.8px;font-weight:400;line-height:1;white-space:nowrap;color:#262626">200</div>
<div style="position:absolute;left:620.5px;top:296.6px;font-size:10.8px;font-weight:400;line-height:1;white-space:nowrap;color:#262626">100</div>
<div style="position:absolute;left:386px;width:200px;top:366px;font-size:10.8px;font-weight:400;line-height:1;white-space:nowrap;text-align:center;color:#262626">MAINSOI</div>
<div style="position:absolute;left:351px;top:278px;width:84px;font-size:10.8px;line-height:1;color:#262626;white-space:nowrap;transform:rotate(-90deg);transform-origin:0 0;text-align:center">PILOTDELTASOI</div>
<div style="position:absolute;left:391.0px;top:166.5px;font-size:12px;line-height:1;color:#000;white-space:nowrap;transform:rotate(90deg);transform-origin:0 0">460</div>
<div style="position:absolute;left:412.0px;top:166.5px;font-size:12px;line-height:1;color:#000;white-space:nowrap;transform:rotate(90deg);transform-origin:0 0">450</div>
<div style="position:absolute;left:433.0px;top:166.5px;font-size:12px;line-height:1;color:#000;white-space:nowrap;transform:rotate(90deg);transform-origin:0 0">440</div>
<div style="position:absolute;left:454.5px;top:166.5px;font-size:12px;line-height:1;color:#000;white-space:nowrap;transform:rotate(90deg);transform-origin:0 0">430</div>
<div style="position:absolute;left:476.0px;top:166.5px;font-size:12px;line-height:1;color:#000;white-space:nowrap;transform:rotate(90deg);transform-origin:0 0">420</div>
<div style="position:absolute;left:500.0px;top:166.5px;font-size:12px;line-height:1;color:#000;white-space:nowrap;transform:rotate(90deg);transform-origin:0 0">410</div>
<div style="position:absolute;left:528.0px;top:166.5px;font-size:12px;line-height:1;color:#000;white-space:nowrap;transform:rotate(90deg);transform-origin:0 0">400</div>
<div style="position:absolute;left:553.2px;top:189px;font-size:12px;line-height:1;color:#000;white-space:nowrap;transform:rotate(-90deg);transform-origin:0 0">390</div>
<div style="position:absolute;left:360.5px;top:390.5px;font-size:10.8px;font-weight:400;line-height:1;white-space:nowrap;">X-axis:</div>
<div style="position:absolute;left:405px;top:385px;width:51px;height:21px;border:1px solid #a8a8ae;background:#fff"></div>
<div style="position:absolute;left:440px;top:386px;width:15px;height:19px;background:#e3e3e3"></div>
<svg style="left:0;top:0" width="655" height="745"><path d="M443.5 394.1L447.5 398.1L451.5 394.1" fill="none" stroke="#383838" stroke-width="1.3"/></svg>
<div style="position:absolute;left:408px;top:390.5px;font-size:11px;font-weight:400;line-height:1;white-space:nowrap;">MAI...</div>
<div style="position:absolute;left:480px;top:390.5px;font-size:10.8px;font-weight:400;line-height:1;white-space:nowrap;">Y-axis:</div>
<div style="position:absolute;left:524px;top:385px;width:51px;height:21px;border:1px solid #a8a8ae;background:#fff"></div>
<div style="position:absolute;left:559px;top:386px;width:15px;height:19px;background:#e3e3e3"></div>
<svg style="left:0;top:0" width="655" height="745"><path d="M562.5 394.1L566.5 398.1L570.5 394.1" fill="none" stroke="#383838" stroke-width="1.3"/></svg>
<div style="position:absolute;left:527px;top:390.5px;font-size:11px;font-weight:400;line-height:1;white-space:nowrap;">PIL...</div>
<div style="position:absolute;left:338px;top:414px;width:317px;height:1px;background:#fafafa"></div>
<div style="position:absolute;left:338px;top:415px;width:317px;height:4px;background:#f0f0f0"></div>
<div style="position:absolute;left:3px;top:414px;width:320px;height:2px;background:#fff"></div>
<div style="position:absolute;left:2px;top:419px;width:321px;height:1px;background:#ababab"></div>
<div style="position:absolute;left:2px;top:420px;width:321px;height:1px;background:#fff"></div>
<div style="position:absolute;left:4px;top:421px;width:318px;height:17px;background:#bfcddb"></div>
<div style="position:absolute;left:8.5px;top:424.3px;font-size:12.1px;font-weight:400;line-height:1;white-space:nowrap;">Optimization Results</div>
<svg style="left:280px;top:424px" width="42" height="12">
<rect x="0" y="0" width="11" height="11" fill="#f0f0f0"/>
<rect x="12" y="0" width="11" height="11" fill="#f0f0f0"/>
<rect x="26" y="0" width="13" height="11" fill="#f0f0f0"/>
<rect x="3.5" y="2.5" width="5" height="6" fill="none" stroke="#262626" stroke-width="1"/><path d="M2 5.5H10" stroke="#262626" stroke-width="1"/>
<rect x="14.5" y="3.5" width="6" height="4" fill="none" stroke="#262626" stroke-width="1"/><path d="M17.5 1V10" stroke="#262626" stroke-width="1"/>
<path d="M28.5 2.3L36.5 8.7M36.5 2.3L28.5 8.7" stroke="#000" stroke-width="1.6"/>
</svg>
<div style="position:absolute;left:3px;top:438px;width:320px;height:1px;background:#ababab"></div>
<div style="position:absolute;left:3px;top:439px;width:320px;height:1px;background:#fff"></div>
<div style="position:absolute;left:9.8px;top:453.5px;font-size:11.2px;font-weight:400;line-height:1;white-space:nowrap;">Vector display format:</div>
<div style="position:absolute;left:124px;top:447px;width:130px;height:22px;border:1px solid #a8a8ae;background:#fff"></div>
<div style="position:absolute;left:238px;top:448px;width:15px;height:20px;background:#e3e3e3"></div>
<svg style="left:0;top:0" width="655" height="745"><path d="M241.5 456.6L245.5 460.6L249.5 456.6" fill="none" stroke="#383838" stroke-width="1.3"/></svg>
<div style="position:absolute;left:127px;top:453.0px;font-size:11px;font-weight:400;line-height:1;white-space:nowrap;">Expanded vertically</div>
<div style="position:absolute;left:4px;top:474px;width:319px;height:1px;background:#ababab"></div>
<div style="position:absolute;left:3px;top:475px;width:303px;height:17px;background:#f0f0f0"></div>
<div style="position:absolute;left:3px;top:475px;width:66px;height:17px;border-right:1px solid #858585;border-bottom:1px solid #858585"></div>
<div style="position:absolute;left:69px;top:475px;width:18px;height:17px;border-right:1px solid #858585;border-bottom:1px solid #858585"></div>
<div style="position:absolute;left:87px;top:475px;width:41px;height:17px;border-right:1px solid #858585;border-bottom:1px solid #858585"></div>
<div style="position:absolute;left:128px;top:475px;width:65px;height:17px;border-right:1px solid #858585;border-bottom:1px solid #858585"></div>
<div style="position:absolute;left:193px;top:475px;width:65px;height:17px;border-right:1px solid #858585;border-bottom:1px solid #858585"></div>
<div style="position:absolute;left:258px;top:475px;width:49px;height:17px;border-right:1px solid #858585;border-bottom:1px solid #858585"></div>
<div style="position:absolute;left:128px;top:475px;width:65px;height:17px;border-top:1px solid #fff;border-left:1px solid #fff;border-right:1px solid #6a6a6a;border-bottom:1px solid #6a6a6a;box-shadow:inset -1px -1px 0 #d0d0d0;background:#f0f0f0"></div>
<div style="position:absolute;left:193px;top:475px;width:65px;height:17px;border-top:1px solid #fff;border-left:1px solid #fff;border-right:1px solid #6a6a6a;border-bottom:1px solid #6a6a6a;box-shadow:inset -1px -1px 0 #d0d0d0;background:#f0f0f0"></div>
<div style="position:absolute;left:258px;top:475px;width:49px;height:17px;border-top:1px solid #fff;border-left:1px solid #fff;border-right:1px solid #6a6a6a;border-bottom:1px solid #6a6a6a;box-shadow:inset -1px -1px 0 #d0d0d0;background:#f0f0f0"></div>
<div style="position:absolute;left:-64px;width:200px;top:478.8px;font-size:10.5px;font-weight:400;line-height:1;white-space:nowrap;text-align:center;">Solution</div>
<div style="position:absolute;left:7.5px;width:200px;top:478.8px;font-size:11.4px;font-weight:400;line-height:1;white-space:nowrap;text-align:center;">Accept</div>
<div style="position:absolute;left:60px;width:200px;top:479.8px;font-size:10.2px;font-weight:700;line-height:1;white-space:nowrap;text-align:center;letter-spacing:0.45px">MAINSOI</div>
<div style="position:absolute;left:124.5px;width:200px;top:479.8px;font-size:10.2px;font-weight:700;line-height:1;white-space:nowrap;text-align:center;">PILOTDE...</div>
<div style="position:absolute;left:263px;top:479.8px;width:43px;overflow:hidden;font-size:10.2px;font-weight:700;line-height:1;white-space:nowrap">PILOTFM</div>
<svg style="left:72px;top:479px" width="14" height="12"><defs><linearGradient id="gsq" x1="0" y1="0" x2="1" y2="1"><stop offset="0" stop-color="#c0f4c0"/><stop offset="1" stop-color="#30c030"/></linearGradient><linearGradient id="grc" x1="0" y1="0" x2="1" y2="1"><stop offset="0" stop-color="#ff7070"/><stop offset="1" stop-color="#d02020"/></linearGradient></defs>
<rect x="0.6" y="0.6" width="6.5" height="6.5" fill="url(#gsq)" stroke="#000" stroke-width="1.2"/><circle cx="8" cy="6.3" r="3.8" fill="url(#grc)" stroke="#000" stroke-width="1.2"/></svg>
<div style="position:absolute;left:3px;top:492px;width:66px;height:17px;background:#f0f0f0;border-right:1px solid #858585;border-bottom:1px solid #858585"></div>
<div style="position:absolute;left:4px;top:493px;width:64px;height:15px;border-top:1px solid #fff;border-left:1px solid #fff;border-bottom:1px solid #707070;border-right:1px solid #a0a0a0"></div>
<div style="position:absolute;left:69px;top:492px;width:18px;height:17px;background:#f0f0f0;border-right:1px solid #858585;border-bottom:1px solid #858585"></div>
<div style="position:absolute;left:87px;top:492px;width:41px;height:17px;background:#f0f0f0;border-right:1px solid #858585;border-bottom:1px solid #858585"></div>
<div style="position:absolute;left:128px;top:492px;width:65px;height:17px;background:#ababab;border-right:1px solid #858585;border-bottom:1px solid #858585"></div>
<div style="position:absolute;left:193px;top:492px;width:65px;height:17px;background:#ababab;border-right:1px solid #858585;border-bottom:1px solid #858585"></div>
<div style="position:absolute;left:258px;top:492px;width:48px;height:17px;background:#ababab;border-bottom:1px solid #858585"></div>
<div style="position:absolute;left:-64px;width:200px;top:496px;font-size:11px;font-weight:700;line-height:1;white-space:nowrap;text-align:center;">1</div>
<div style="position:absolute;right:464px;top:495.7px;font-size:10.6px;font-weight:400;line-height:1;white-space:nowrap;text-align:right;">2.381</div>
<div style="position:absolute;right:398.5px;top:495.7px;font-size:10.6px;font-weight:400;line-height:1;white-space:nowrap;text-align:right;">6.838</div>
<div style="position:absolute;left:259px;top:495.7px;width:47px;height:13px;overflow:hidden;font-size:10.6px;line-height:1;white-space:nowrap"><div style="position:absolute;left:35.5px;top:0">0.00</div></div>
<div style="position:absolute;left:3px;top:509px;width:66px;height:17px;background:#f0f0f0;border-right:1px solid #858585;border-bottom:1px solid #858585"></div>
<div style="position:absolute;left:69px;top:509px;width:18px;height:17px;background:#f0f0f0;border-right:1px solid #858585;border-bottom:1px solid #858585"></div>
<div style="position:absolute;left:87px;top:509px;width:41px;height:17px;background:#f0f0f0;border-right:1px solid #858585;border-bottom:1px solid #858585"></div>
<div style="position:absolute;left:128px;top:509px;width:65px;height:17px;background:#fff;border-right:1px solid #858585;border-bottom:1px solid #858585"></div>
<div style="position:absolute;left:193px;top:509px;width:65px;height:17px;background:#fff;border-right:1px solid #858585;border-bottom:1px solid #858585"></div>
<div style="position:absolute;left:258px;top:509px;width:48px;height:17px;background:#fff;border-bottom:1px solid #858585"></div>
<div style="position:absolute;left:-64px;width:200px;top:513px;font-size:11px;font-weight:400;line-height:1;white-space:nowrap;text-align:center;">2</div>
<div style="position:absolute;right:464px;top:512.7px;font-size:10.6px;font-weight:400;line-height:1;white-space:nowrap;text-align:right;">2.581</div>
<div style="position:absolute;right:398.5px;top:512.7px;font-size:10.6px;font-weight:400;line-height:1;white-space:nowrap;text-align:right;">5.968</div>
<div style="position:absolute;left:259px;top:512.7px;width:47px;height:13px;overflow:hidden;font-size:10.6px;line-height:1;white-space:nowrap"><div style="position:absolute;left:35.5px;top:0">0.00</div></div>
<div style="position:absolute;left:3px;top:526px;width:66px;height:17px;background:#f0f0f0;border-right:1px solid #858585;border-bottom:1px solid #858585"></div>
<div style="position:absolute;left:69px;top:526px;width:18px;height:17px;background:#f0f0f0;border-right:1px solid #858585;border-bottom:1px solid #858585"></div>
<div style="position:absolute;left:87px;top:526px;width:41px;height:17px;background:#f0f0f0;border-right:1px solid #858585;border-bottom:1px solid #858585"></div>
<div style="position:absolute;left:128px;top:526px;width:65px;height:17px;background:#fff;border-right:1px solid #858585;border-bottom:1px solid #858585"></div>
<div style="position:absolute;left:193px;top:526px;width:65px;height:17px;background:#fff;border-right:1px solid #858585;border-bottom:1px solid #858585"></div>
<div style="position:absolute;left:258px;top:526px;width:48px;height:17px;background:#fff;border-bottom:1px solid #858585"></div>
<div style="position:absolute;left:-64px;width:200px;top:530px;font-size:11px;font-weight:400;line-height:1;white-space:nowrap;text-align:center;">3</div>
<div style="position:absolute;right:464px;top:529.7px;font-size:10.6px;font-weight:400;line-height:1;white-space:nowrap;text-align:right;">2.393</div>
<div style="position:absolute;right:398.5px;top:529.7px;font-size:10.6px;font-weight:400;line-height:1;white-space:nowrap;text-align:right;">6.767</div>
<div style="position:absolute;left:259px;top:529.7px;width:47px;height:13px;overflow:hidden;font-size:10.6px;line-height:1;white-space:nowrap"><div style="position:absolute;left:35.5px;top:0">0.00</div></div>
<div style="position:absolute;left:3px;top:543px;width:66px;height:17px;background:#f0f0f0;border-right:1px solid #858585;border-bottom:1px solid #858585"></div>
<div style="position:absolute;left:69px;top:543px;width:18px;height:17px;background:#f0f0f0;border-right:1px solid #858585;border-bottom:1px solid #858585"></div>
<div style="position:absolute;left:87px;top:543px;width:41px;height:17px;background:#f0f0f0;border-right:1px solid #858585;border-bottom:1px solid #858585"></div>
<div style="position:absolute;left:128px;top:543px;width:65px;height:17px;background:#fff;border-right:1px solid #858585;border-bottom:1px solid #858585"></div>
<div style="position:absolute;left:193px;top:543px;width:65px;height:17px;background:#fff;border-right:1px solid #858585;border-bottom:1px solid #858585"></div>
<div style="position:absolute;left:258px;top:543px;width:48px;height:17px;background:#fff;border-bottom:1px solid #858585"></div>
<div style="position:absolute;left:-64px;width:200px;top:547px;font-size:11px;font-weight:400;line-height:1;white-space:nowrap;text-align:center;">4</div>
<div style="position:absolute;right:464px;top:546.7px;font-size:10.6px;font-weight:400;line-height:1;white-space:nowrap;text-align:right;">2.606</div>
<div style="position:absolute;right:398.5px;top:546.7px;font-size:10.6px;font-weight:400;line-height:1;white-space:nowrap;text-align:right;">6.028</div>
<div style="position:absolute;left:259px;top:546.7px;width:47px;height:13px;overflow:hidden;font-size:10.6px;line-height:1;white-space:nowrap"><div style="position:absolute;left:35.5px;top:0">0.10</div></div>
<div style="position:absolute;left:3px;top:560px;width:66px;height:17px;background:#f0f0f0;border-right:1px solid #858585;border-bottom:1px solid #858585"></div>
<div style="position:absolute;left:69px;top:560px;width:18px;height:17px;background:#f0f0f0;border-right:1px solid #858585;border-bottom:1px solid #858585"></div>
<div style="position:absolute;left:87px;top:560px;width:41px;height:17px;background:#f0f0f0;border-right:1px solid #858585;border-bottom:1px solid #858585"></div>
<div style="position:absolute;left:128px;top:560px;width:65px;height:17px;background:#fff;border-right:1px solid #858585;border-bottom:1px solid #858585"></div>
<div style="position:absolute;left:193px;top:560px;width:65px;height:17px;background:#fff;border-right:1px solid #858585;border-bottom:1px solid #858585"></div>
<div style="position:absolute;left:258px;top:560px;width:48px;height:17px;background:#fff;border-bottom:1px solid #858585"></div>
<div style="position:absolute;left:-64px;width:200px;top:564px;font-size:11px;font-weight:400;line-height:1;white-space:nowrap;text-align:center;">5</div>
<div style="position:absolute;right:464px;top:563.7px;font-size:10.6px;font-weight:400;line-height:1;white-space:nowrap;text-align:right;">2.579</div>
<div style="position:absolute;right:398.5px;top:563.7px;font-size:10.6px;font-weight:400;line-height:1;white-space:nowrap;text-align:right;">5.968</div>
<div style="position:absolute;left:259px;top:563.7px;width:47px;height:13px;overflow:hidden;font-size:10.6px;line-height:1;white-space:nowrap"><div style="position:absolute;left:35.5px;top:0">0.00</div></div>
<div style="position:absolute;left:3px;top:577px;width:66px;height:17px;background:#f0f0f0;border-right:1px solid #858585;border-bottom:1px solid #858585"></div>
<div style="position:absolute;left:69px;top:577px;width:18px;height:17px;background:#f0f0f0;border-right:1px solid #858585;border-bottom:1px solid #858585"></div>
<div style="position:absolute;left:87px;top:577px;width:41px;height:17px;background:#f0f0f0;border-right:1px solid #858585;border-bottom:1px solid #858585"></div>
<div style="position:absolute;left:128px;top:577px;width:65px;height:17px;background:#fff;border-right:1px solid #858585;border-bottom:1px solid #858585"></div>
<div style="position:absolute;left:193px;top:577px;width:65px;height:17px;background:#fff;border-right:1px solid #858585;border-bottom:1px solid #858585"></div>
<div style="position:absolute;left:258px;top:577px;width:48px;height:17px;background:#fff;border-bottom:1px solid #858585"></div>
<div style="position:absolute;left:-64px;width:200px;top:581px;font-size:11px;font-weight:400;line-height:1;white-space:nowrap;text-align:center;">6</div>
<div style="position:absolute;right:464px;top:580.7px;font-size:10.6px;font-weight:400;line-height:1;white-space:nowrap;text-align:right;">2.579</div>
<div style="position:absolute;right:398.5px;top:580.7px;font-size:10.6px;font-weight:400;line-height:1;white-space:nowrap;text-align:right;">5.969</div>
<div style="position:absolute;left:259px;top:580.7px;width:47px;height:13px;overflow:hidden;font-size:10.6px;line-height:1;white-space:nowrap"><div style="position:absolute;left:35.5px;top:0">0.00</div></div>
<div style="position:absolute;left:3px;top:594px;width:66px;height:17px;background:#f0f0f0;border-right:1px solid #858585;border-bottom:1px solid #858585"></div>
<div style="position:absolute;left:69px;top:594px;width:18px;height:17px;background:#f0f0f0;border-right:1px solid #858585;border-bottom:1px solid #858585"></div>
<div style="position:absolute;left:87px;top:594px;width:41px;height:17px;background:#f0f0f0;border-right:1px solid #858585;border-bottom:1px solid #858585"></div>
<div style="position:absolute;left:128px;top:594px;width:65px;height:17px;background:#fff;border-right:1px solid #858585;border-bottom:1px solid #858585"></div>
<div style="position:absolute;left:193px;top:594px;width:65px;height:17px;background:#fff;border-right:1px solid #858585;border-bottom:1px solid #858585"></div>
<div style="position:absolute;left:258px;top:594px;width:48px;height:17px;background:#fff;border-bottom:1px solid #858585"></div>
<div style="position:absolute;left:-64px;width:200px;top:598px;font-size:11px;font-weight:400;line-height:1;white-space:nowrap;text-align:center;">7</div>
<div style="position:absolute;right:464px;top:597.7px;font-size:10.6px;font-weight:400;line-height:1;white-space:nowrap;text-align:right;">2.581</div>
<div style="position:absolute;right:398.5px;top:597.7px;font-size:10.6px;font-weight:400;line-height:1;white-space:nowrap;text-align:right;">5.968</div>
<div style="position:absolute;left:259px;top:597.7px;width:47px;height:13px;overflow:hidden;font-size:10.6px;line-height:1;white-space:nowrap"><div style="position:absolute;left:35.5px;top:0">0.00</div></div>
<div style="position:absolute;left:3px;top:611px;width:66px;height:17px;background:#f0f0f0;border-right:1px solid #858585;border-bottom:1px solid #858585"></div>
<div style="position:absolute;left:69px;top:611px;width:18px;height:17px;background:#f0f0f0;border-right:1px solid #858585;border-bottom:1px solid #858585"></div>
<div style="position:absolute;left:87px;top:611px;width:41px;height:17px;background:#f0f0f0;border-right:1px solid #858585;border-bottom:1px solid #858585"></div>
<div style="position:absolute;left:128px;top:611px;width:65px;height:17px;background:#fff;border-right:1px solid #858585;border-bottom:1px solid #858585"></div>
<div style="position:absolute;left:193px;top:611px;width:65px;height:17px;background:#fff;border-right:1px solid #858585;border-bottom:1px solid #858585"></div>
<div style="position:absolute;left:258px;top:611px;width:48px;height:17px;background:#fff;border-bottom:1px solid #858585"></div>
<div style="position:absolute;left:-64px;width:200px;top:615px;font-size:11px;font-weight:400;line-height:1;white-space:nowrap;text-align:center;">8</div>
<div style="position:absolute;right:464px;top:614.7px;font-size:10.6px;font-weight:400;line-height:1;white-space:nowrap;text-align:right;">2.398</div>
<div style="position:absolute;right:398.5px;top:614.7px;font-size:10.6px;font-weight:400;line-height:1;white-space:nowrap;text-align:right;">6.766</div>
<div style="position:absolute;left:259px;top:614.7px;width:47px;height:13px;overflow:hidden;font-size:10.6px;line-height:1;white-space:nowrap"><div style="position:absolute;left:35.5px;top:0">0.00</div></div>
<div style="position:absolute;left:3px;top:628px;width:66px;height:17px;background:#f0f0f0;border-right:1px solid #858585;border-bottom:1px solid #858585"></div>
<div style="position:absolute;left:69px;top:628px;width:18px;height:17px;background:#f0f0f0;border-right:1px solid #858585;border-bottom:1px solid #858585"></div>
<div style="position:absolute;left:87px;top:628px;width:41px;height:17px;background:#f0f0f0;border-right:1px solid #858585;border-bottom:1px solid #858585"></div>
<div style="position:absolute;left:128px;top:628px;width:65px;height:17px;background:#fff;border-right:1px solid #858585;border-bottom:1px solid #858585"></div>
<div style="position:absolute;left:193px;top:628px;width:65px;height:17px;background:#fff;border-right:1px solid #858585;border-bottom:1px solid #858585"></div>
<div style="position:absolute;left:258px;top:628px;width:48px;height:17px;background:#fff;border-bottom:1px solid #858585"></div>
<div style="position:absolute;left:-64px;width:200px;top:632px;font-size:11px;font-weight:400;line-height:1;white-space:nowrap;text-align:center;">9</div>
<div style="position:absolute;right:464px;top:631.7px;font-size:10.6px;font-weight:400;line-height:1;white-space:nowrap;text-align:right;">2.592</div>
<div style="position:absolute;right:398.5px;top:631.7px;font-size:10.6px;font-weight:400;line-height:1;white-space:nowrap;text-align:right;">5.405</div>
<div style="position:absolute;left:259px;top:631.7px;width:47px;height:13px;overflow:hidden;font-size:10.6px;line-height:1;white-space:nowrap"><div style="position:absolute;left:35.5px;top:0">0.10</div></div>
<div style="position:absolute;left:3px;top:645px;width:66px;height:17px;background:#f0f0f0;border-right:1px solid #858585;border-bottom:1px solid #858585"></div>
<div style="position:absolute;left:69px;top:645px;width:18px;height:17px;background:#f0f0f0;border-right:1px solid #858585;border-bottom:1px solid #858585"></div>
<div style="position:absolute;left:87px;top:645px;width:41px;height:17px;background:#f0f0f0;border-right:1px solid #858585;border-bottom:1px solid #858585"></div>
<div style="position:absolute;left:128px;top:645px;width:65px;height:17px;background:#fff;border-right:1px solid #858585;border-bottom:1px solid #858585"></div>
<div style="position:absolute;left:193px;top:645px;width:65px;height:17px;background:#fff;border-right:1px solid #858585;border-bottom:1px solid #858585"></div>
<div style="position:absolute;left:258px;top:645px;width:48px;height:17px;background:#fff;border-bottom:1px solid #858585"></div>
<div style="position:absolute;left:-64px;width:200px;top:649px;font-size:11px;font-weight:400;line-height:1;white-space:nowrap;text-align:center;">10</div>
<div style="position:absolute;right:464px;top:648.7px;font-size:10.6px;font-weight:400;line-height:1;white-space:nowrap;text-align:right;">2.581</div>
<div style="position:absolute;right:398.5px;top:648.7px;font-size:10.6px;font-weight:400;line-height:1;white-space:nowrap;text-align:right;">5.968</div>
<div style="position:absolute;left:259px;top:648.7px;width:47px;height:13px;overflow:hidden;font-size:10.6px;line-height:1;white-space:nowrap"><div style="position:absolute;left:35.5px;top:0">0.00</div></div>
<div style="position:absolute;left:3px;top:662px;width:66px;height:17px;background:#f0f0f0;border-right:1px solid #858585;border-bottom:1px solid #858585"></div>
<div style="position:absolute;left:69px;top:662px;width:18px;height:17px;background:#f0f0f0;border-right:1px solid #858585;border-bottom:1px solid #858585"></div>
<div style="position:absolute;left:87px;top:662px;width:41px;height:17px;background:#f0f0f0;border-right:1px solid #858585;border-bottom:1px solid #858585"></div>
<div style="position:absolute;left:128px;top:662px;width:65px;height:17px;background:#fff;border-right:1px solid #858585;border-bottom:1px solid #858585"></div>
<div style="position:absolute;left:193px;top:662px;width:65px;height:17px;background:#fff;border-right:1px solid #858585;border-bottom:1px solid #858585"></div>
<div style="position:absolute;left:258px;top:662px;width:48px;height:17px;background:#fff;border-bottom:1px solid #858585"></div>
<div style="position:absolute;left:-64px;width:200px;top:666px;font-size:11px;font-weight:400;line-height:1;white-space:nowrap;text-align:center;">11</div>
<div style="position:absolute;right:464px;top:665.7px;font-size:10.6px;font-weight:400;line-height:1;white-space:nowrap;text-align:right;">2.415</div>
<div style="position:absolute;right:398.5px;top:665.7px;font-size:10.6px;font-weight:400;line-height:1;white-space:nowrap;text-align:right;">6.76</div>
<div style="position:absolute;left:259px;top:665.7px;width:47px;height:13px;overflow:hidden;font-size:10.6px;line-height:1;white-space:nowrap"><div style="position:absolute;left:35.5px;top:0">0.00</div></div>
<div style="position:absolute;left:3px;top:679px;width:66px;height:17px;background:#f0f0f0;border-right:1px solid #858585;border-bottom:1px solid #858585"></div>
<div style="position:absolute;left:69px;top:679px;width:18px;height:17px;background:#f0f0f0;border-right:1px solid #858585;border-bottom:1px solid #858585"></div>
<div style="position:absolute;left:87px;top:679px;width:41px;height:17px;background:#f0f0f0;border-right:1px solid #858585;border-bottom:1px solid #858585"></div>
<div style="position:absolute;left:128px;top:679px;width:65px;height:17px;background:#fff;border-right:1px solid #858585;border-bottom:1px solid #858585"></div>
<div style="position:absolute;left:193px;top:679px;width:65px;height:17px;background:#fff;border-right:1px solid #858585;border-bottom:1px solid #858585"></div>
<div style="position:absolute;left:258px;top:679px;width:48px;height:17px;background:#fff;border-bottom:1px solid #858585"></div>
<div style="position:absolute;left:-64px;width:200px;top:683px;font-size:11px;font-weight:400;line-height:1;white-space:nowrap;text-align:center;">12</div>
<div style="position:absolute;right:464px;top:682.7px;font-size:10.6px;font-weight:400;line-height:1;white-space:nowrap;text-align:right;">2.657</div>
<div style="position:absolute;right:398.5px;top:682.7px;font-size:10.6px;font-weight:400;line-height:1;white-space:nowrap;text-align:right;">5.966</div>
<div style="position:absolute;left:259px;top:682.7px;width:47px;height:13px;overflow:hidden;font-size:10.6px;line-height:1;white-space:nowrap"><div style="position:absolute;left:35.5px;top:0">0.00</div></div>
<div style="position:absolute;left:3px;top:696px;width:66px;height:17px;background:#f0f0f0;border-right:1px solid #858585;border-bottom:1px solid #858585"></div>
<div style="position:absolute;left:69px;top:696px;width:18px;height:17px;background:#f0f0f0;border-right:1px solid #858585;border-bottom:1px solid #858585"></div>
<div style="position:absolute;left:87px;top:696px;width:41px;height:17px;background:#f0f0f0;border-right:1px solid #858585;border-bottom:1px solid #858585"></div>
<div style="position:absolute;left:128px;top:696px;width:65px;height:17px;background:#fff;border-right:1px solid #858585;border-bottom:1px solid #858585"></div>
<div style="position:absolute;left:193px;top:696px;width:65px;height:17px;background:#fff;border-right:1px solid #858585;border-bottom:1px solid #858585"></div>
<div style="position:absolute;left:258px;top:696px;width:48px;height:17px;background:#fff;border-bottom:1px solid #858585"></div>
<div style="position:absolute;left:-64px;width:200px;top:700px;font-size:11px;font-weight:400;line-height:1;white-space:nowrap;text-align:center;">13</div>
<div style="position:absolute;right:464px;top:699.7px;font-size:10.6px;font-weight:400;line-height:1;white-space:nowrap;text-align:right;">2.706</div>
<div style="position:absolute;right:398.5px;top:699.7px;font-size:10.6px;font-weight:400;line-height:1;white-space:nowrap;text-align:right;">5.946</div>
<div style="position:absolute;left:259px;top:699.7px;width:47px;height:13px;overflow:hidden;font-size:10.6px;line-height:1;white-space:nowrap"><div style="position:absolute;left:41.19999999999999px;top:0">0</div></div>
<div style="position:absolute;left:3px;top:713px;width:66px;height:17px;background:#f0f0f0;border-right:1px solid #858585;border-bottom:1px solid #858585"></div>
<div style="position:absolute;left:69px;top:713px;width:18px;height:17px;background:#f0f0f0;border-right:1px solid #858585;border-bottom:1px solid #858585"></div>
<div style="position:absolute;left:87px;top:713px;width:41px;height:17px;background:#f0f0f0;border-right:1px solid #858585;border-bottom:1px solid #858585"></div>
<div style="position:absolute;left:128px;top:713px;width:65px;height:17px;background:#fff;border-right:1px solid #858585;border-bottom:1px solid #858585"></div>
<div style="position:absolute;left:193px;top:713px;width:65px;height:17px;background:#fff;border-right:1px solid #858585;border-bottom:1px solid #858585"></div>
<div style="position:absolute;left:258px;top:713px;width:48px;height:17px;background:#fff;border-bottom:1px solid #858585"></div>
<div style="position:absolute;left:-64px;width:200px;top:717px;font-size:11px;font-weight:400;line-height:1;white-space:nowrap;text-align:center;">14</div>
<div style="position:absolute;right:464px;top:716.7px;font-size:10.6px;font-weight:400;line-height:1;white-space:nowrap;text-align:right;">2.45</div>
<div style="position:absolute;right:398.5px;top:716.7px;font-size:10.6px;font-weight:400;line-height:1;white-space:nowrap;text-align:right;">6.181</div>
<div style="position:absolute;left:259px;top:716.7px;width:47px;height:13px;overflow:hidden;font-size:10.6px;line-height:1;white-space:nowrap"><div style="position:absolute;left:35.5px;top:0">0.00</div></div>
<div style="position:absolute;left:3px;top:730px;width:66px;height:17px;background:#f0f0f0;border-right:1px solid #858585;border-bottom:1px solid #858585"></div>
<div style="position:absolute;left:69px;top:730px;width:18px;height:17px;background:#f0f0f0;border-right:1px solid #858585;border-bottom:1px solid #858585"></div>
<div style="position:absolute;left:87px;top:730px;width:41px;height:17px;background:#f0f0f0;border-right:1px solid #858585;border-bottom:1px solid #858585"></div>
<div style="position:absolute;left:128px;top:730px;width:65px;height:17px;background:#fff;border-right:1px solid #858585;border-bottom:1px solid #858585"></div>
<div style="position:absolute;left:193px;top:730px;width:65px;height:17px;background:#fff;border-right:1px solid #858585;border-bottom:1px solid #858585"></div>
<div style="position:absolute;left:258px;top:730px;width:48px;height:17px;background:#fff;border-bottom:1px solid #858585"></div>
<div style="position:absolute;left:-64px;width:200px;top:734px;font-size:11px;font-weight:400;line-height:1;white-space:nowrap;text-align:center;">15</div>
<div style="position:absolute;right:464px;top:733.7px;font-size:10.6px;font-weight:400;line-height:1;white-space:nowrap;text-align:right;">2.398</div>
<div style="position:absolute;right:398.5px;top:733.7px;font-size:10.6px;font-weight:400;line-height:1;white-space:nowrap;text-align:right;">6.766</div>
<div style="position:absolute;left:259px;top:733.7px;width:47px;height:13px;overflow:hidden;font-size:10.6px;line-height:1;white-space:nowrap"><div style="position:absolute;left:35.5px;top:0">0.00</div></div>
<div style="position:absolute;left:306px;top:475px;width:17px;height:270px;background:#f0f0f0"></div>
<div style="position:absolute;left:307px;top:509px;width:15px;height:16px;background:#cdcdcd"></div>
<svg style="left:0;top:0" width="655" height="745"><defs><linearGradient id="gs2" x1="0" y1="0" x2="1" y2="1"><stop offset="0" stop-color="#c8f5c8"/><stop offset="1" stop-color="#20c020"/></linearGradient><linearGradient id="gt2" x1="0" y1="0" x2="0" y2="1"><stop offset="0" stop-color="#ffd090"/><stop offset="1" stop-color="#f89830"/></linearGradient></defs><polygon points="72.5,505.5 83.5,505.5 78,494.3" fill="url(#gt2)" stroke="#d89050" stroke-width="0.9" stroke-linejoin="round"/><rect x="108.5" y="495.5" width="12" height="12" fill="#fff" stroke="#333" stroke-width="1"/><rect x="72.8" y="512.3" width="10.5" height="10.5" fill="url(#gs2)" stroke="#7a7a7a" stroke-width="1.2"/><rect x="108.5" y="512.5" width="12" height="12" fill="#fff" stroke="#333" stroke-width="1"/><path d="M110.6 518.2L113.6 521.3L119 515" fill="none" stroke="#333" stroke-width="1.3"/><polygon points="72.5,539.5 83.5,539.5 78,528.3" fill="url(#gt2)" stroke="#d89050" stroke-width="0.9" stroke-linejoin="round"/><rect x="108.5" y="529.5" width="12" height="12" fill="#fff" stroke="#333" stroke-width="1"/><rect x="72.8" y="546.3" width="10.5" height="10.5" fill="url(#gs2)" stroke="#7a7a7a" stroke-width="1.2"/><rect x="108.5" y="546.5" width="12" height="12" fill="#fff" stroke="#333" stroke-width="1"/><path d="M110.6 552.2L113.6 555.3L119 549" fill="none" stroke="#333" stroke-width="1.3"/><rect x="72.8" y="563.3" width="10.5" height="10.5" fill="url(#gs2)" stroke="#7a7a7a" stroke-width="1.2"/><rect x="108.5" y="563.5" width="12" height="12" fill="#fff" stroke="#333" stroke-width="1"/><path d="M110.6 569.2L113.6 572.3L119 566" fill="none" stroke="#333" stroke-width="1.3"/><rect x="72.8" y="580.3" width="10.5" height="10.5" fill="url(#gs2)" stroke="#7a7a7a" stroke-width="1.2"/><rect x="108.5" y="580.5" width="12" height="12" fill="#fff" stroke="#333" stroke-width="1"/><path d="M110.6 586.2L113.6 589.3L119 583" fill="none" stroke="#333" stroke-width="1.3"/><rect x="72.8" y="597.3" width="10.5" height="10.5" fill="url(#gs2)" stroke="#7a7a7a" stroke-width="1.2"/><rect x="108.5" y="597.5" width="12" height="12" fill="#fff" stroke="#333" stroke-width="1"/><path d="M110.6 603.2L113.6 606.3L119 600" fill="none" stroke="#333" stroke-width="1.3"/><rect x="72.8" y="614.3" width="10.5" height="10.5" fill="url(#gs2)" stroke="#7a7a7a" stroke-width="1.2"/><rect x="108.5" y="614.5" width="12" height="12" fill="#fff" stroke="#333" stroke-width="1"/><path d="M110.6 620.2L113.6 623.3L119 617" fill="none" stroke="#333" stroke-width="1.3"/><rect x="72.8" y="631.3" width="10.5" height="10.5" fill="url(#gs2)" stroke="#7a7a7a" stroke-width="1.2"/><rect x="108.5" y="631.5" width="12" height="12" fill="#fff" stroke="#333" stroke-width="1"/><path d="M110.6 637.2L113.6 640.3L119 634" fill="none" stroke="#333" stroke-width="1.3"/><rect x="72.8" y="648.3" width="10.5" height="10.5" fill="url(#gs2)" stroke="#7a7a7a" stroke-width="1.2"/><rect x="108.5" y="648.5" width="12" height="12" fill="#fff" stroke="#333" stroke-width="1"/><path d="M110.6 654.2L113.6 657.3L119 651" fill="none" stroke="#333" stroke-width="1.3"/><polygon points="72.5,675.5 83.5,675.5 78,664.3" fill="url(#gt2)" stroke="#d89050" stroke-width="0.9" stroke-linejoin="round"/><rect x="108.5" y="665.5" width="12" height="12" fill="#fff" stroke="#333" stroke-width="1"/><rect x="72.8" y="682.3" width="10.5" height="10.5" fill="url(#gs2)" stroke="#7a7a7a" stroke-width="1.2"/><rect x="108.5" y="682.5" width="12" height="12" fill="#fff" stroke="#333" stroke-width="1"/><path d="M110.6 688.2L113.6 691.3L119 685" fill="none" stroke="#333" stroke-width="1.3"/><rect x="72.8" y="699.3" width="10.5" height="10.5" fill="url(#gs2)" stroke="#7a7a7a" stroke-width="1.2"/><rect x="108.5" y="699.5" width="12" height="12" fill="#fff" stroke="#333" stroke-width="1"/><path d="M110.6 705.2L113.6 708.3L119 702" fill="none" stroke="#333" stroke-width="1.3"/><rect x="72.8" y="716.3" width="10.5" height="10.5" fill="url(#gs2)" stroke="#7a7a7a" stroke-width="1.2"/><rect x="108.5" y="716.5" width="12" height="12" fill="#fff" stroke="#333" stroke-width="1"/><path d="M110.6 722.2L113.6 725.3L119 719" fill="none" stroke="#333" stroke-width="1.3"/><rect x="72.8" y="733.3" width="10.5" height="10.5" fill="url(#gs2)" stroke="#7a7a7a" stroke-width="1.2"/><rect x="108.5" y="733.5" width="12" height="12" fill="#fff" stroke="#333" stroke-width="1"/><path d="M110.6 739.2L113.6 742.3L119 736" fill="none" stroke="#333" stroke-width="1.3"/><path d="M311 504L314.5 500L318 504" fill="none" stroke="#606060" stroke-width="2"/><path d="M311 737.5L314.5 741.5L318 737.5" fill="none" stroke="#606060" stroke-width="2"/></svg>
<div style="position:absolute;left:322px;top:439px;width:1px;height:36px;background:#ababab"></div>
<div style="position:absolute;left:323px;top:439px;width:1px;height:306px;background:#fff"></div>
<div style="position:absolute;left:338px;top:419px;width:317px;height:1px;background:#ababab"></div>
<div style="position:absolute;left:338px;top:420px;width:317px;height:1px;background:#fff"></div>
<div style="position:absolute;left:339px;top:421px;width:318px;height:17px;background:#bfcddb"></div>
<div style="position:absolute;left:343.5px;top:424.3px;font-size:12.1px;font-weight:400;line-height:1;white-space:nowrap;">Constraint Summary</div>
<svg style="left:615px;top:424px" width="42" height="12">
<rect x="0" y="0" width="11" height="11" fill="#f0f0f0"/>
<rect x="12" y="0" width="11" height="11" fill="#f0f0f0"/>
<rect x="26" y="0" width="13" height="11" fill="#f0f0f0"/>
<rect x="3.5" y="2.5" width="5" height="6" fill="none" stroke="#262626" stroke-width="1"/><path d="M2 5.5H10" stroke="#262626" stroke-width="1"/>
<rect x="14.5" y="3.5" width="6" height="4" fill="none" stroke="#262626" stroke-width="1"/><path d="M17.5 1V10" stroke="#262626" stroke-width="1"/>
<path d="M28.5 2.3L36.5 8.7M36.5 2.3L28.5 8.7" stroke="#000" stroke-width="1.6"/>
</svg>
<div style="position:absolute;left:338px;top:438px;width:317px;height:307px;background:#fff"></div>
<div style="position:absolute;left:339px;top:438px;width:316px;height:18px;background:#f0f0f0;border-bottom:1px solid #ababab"></div>
<div style="position:absolute;left:339px;top:438px;width:316px;height:1px;background:#ababab"></div>
<div style="position:absolute;left:339px;top:439px;width:316px;height:1px;background:#fff"></div>
<div style="position:absolute;left:437px;top:438px;width:1px;height:52px;background:#ababab"></div>
<div style="position:absolute;left:338px;top:472px;width:317px;height:1px;background:#ababab"></div>
<div style="position:absolute;left:338px;top:489px;width:317px;height:1px;background:#ababab"></div>
<div style="position:absolute;left:341.5px;top:443px;font-size:10.7px;font-weight:400;line-height:1;white-space:nowrap;">Name</div>
<div style="position:absolute;left:441px;top:443px;font-size:10.7px;font-weight:400;line-height:1;white-space:nowrap;">Description</div>
<div style="position:absolute;left:339.5px;top:460px;font-size:10.8px;font-weight:400;line-height:1;white-space:nowrap;">BSFC_Boundary</div>
<div style="position:absolute;left:439.5px;top:460px;font-size:10.5px;font-weight:400;line-height:1;white-space:nowrap;">Boundary constraint of BSFC(MAINSOI, PILOTDELTASOI)</div>
<div style="position:absolute;left:339.5px;top:477px;font-size:10.8px;font-weight:400;line-height:1;white-space:nowrap;">VGTSpeedMax</div>
<div style="position:absolute;left:439px;top:477px;font-size:10.5px;font-weight:400;line-height:1;white-space:nowrap;letter-spacing:-0.25px">VGTSPEEDNorm(MAINSOI, PILOTDELTASOI, EXH)</div>
</body></html>
